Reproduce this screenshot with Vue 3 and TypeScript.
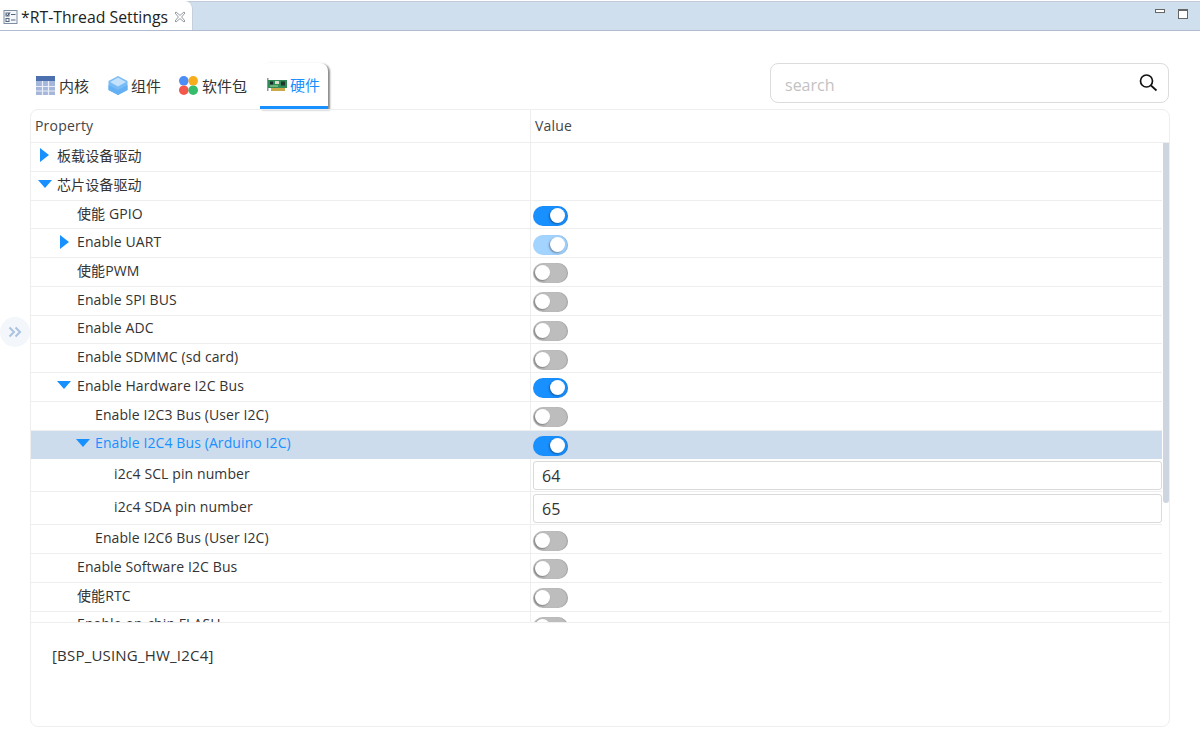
<script setup lang="ts">
interface Row {
  label: string
  level: number
  arrow?: 'right' | 'down'
  toggle?: 'on' | 'dim' | 'off'
  input?: string
  selected?: boolean
}

const rows: Row[] = [
  { label: '板载设备驱动', level: 0, arrow: 'right' },
  { label: '芯片设备驱动', level: 0, arrow: 'down' },
  { label: '使能 GPIO', level: 1, toggle: 'on' },
  { label: 'Enable UART', level: 1, arrow: 'right', toggle: 'dim' },
  { label: '使能PWM', level: 1, toggle: 'off' },
  { label: 'Enable SPI BUS', level: 1, toggle: 'off' },
  { label: 'Enable ADC', level: 1, toggle: 'off' },
  { label: 'Enable SDMMC (sd card)', level: 1, toggle: 'off' },
  { label: 'Enable Hardware I2C Bus', level: 1, arrow: 'down', toggle: 'on' },
  { label: 'Enable I2C3 Bus (User I2C)', level: 2, toggle: 'off' },
  { label: 'Enable I2C4 Bus (Arduino I2C)', level: 2, arrow: 'down', toggle: 'on', selected: true },
  { label: 'i2c4 SCL pin number', level: 3, input: '64' },
  { label: 'i2c4 SDA pin number', level: 3, input: '65' },
  { label: 'Enable I2C6 Bus (User I2C)', level: 2, toggle: 'off' },
  { label: 'Enable Software I2C Bus', level: 1, toggle: 'off' },
  { label: '使能RTC', level: 1, toggle: 'off' },
  { label: 'Enable on-chip FLASH', level: 1, toggle: 'off' }
]
</script>

<template>
  <div class="window">
    <header class="titlebar">
      <div class="editor-tab">
        <svg class="form-icon" width="16" height="16" viewBox="0 0 16 16">
          <rect x="1" y="1.5" width="13" height="13" fill="#f4f7fa" stroke="#7d8ea3" />
          <rect x="3" y="4" width="3" height="3" fill="none" stroke="#56667a" />
          <rect x="3" y="9.5" width="3" height="3" fill="none" stroke="#56667a" />
          <path d="M3.5 5.5l1 1 2.5-3" fill="none" stroke="#2f4a63" />
          <path d="M8 5.5h4.500M8 11h4.500" stroke="#56667a" />
        </svg>
        <span class="editor-title">*RT-Thread Settings</span>
        <svg class="close-icon" width="12" height="12" viewBox="0 0 12 12">
          <path d="M2 1l4 3.4L10 1l1 1-3.4 4L11 10l-1 1-4-3.4L2 11l-1-1 3.4-4L1 2z" fill="#fff" stroke="#8a8f96" stroke-width=".9" />
        </svg>
      </div>
      <div class="window-buttons">
        <span class="win-min"></span>
        <span class="win-max"></span>
      </div>
    </header>

    <main class="content">
      <div class="toolbar">
        <nav class="tabs">
          <div class="tab">
            <svg width="19" height="19" viewBox="0 0 19 19">
              <rect width="19" height="19" fill="#a4b7db" />
              <rect width="19" height="5" fill="#4c6fae" />
              <path d="M0 10.500h19M0 15h19M6.500 5v14M12.500 5v14" stroke="#e9eef8" stroke-width="1.200" />
            </svg>
            <span>内核</span>
          </div>
          <div class="tab compact">
            <svg width="20" height="19" viewBox="0 0 20 19">
              <path d="M10 0l9.500 5v9L10 19 .5 14V5z" fill="#79bbf5" />
              <path d="M10 1.500L18 6l-8 4.500L2 6z" fill="#c4e2fb" />
              <path d="M.5 9l9.500 5 9.500-5v5L10 19 .5 14z" fill="#64b0f5" />
            </svg>
            <span>组件</span>
          </div>
          <div class="tab">
            <svg width="19" height="19" viewBox="0 0 19 19">
              <circle cx="4.800" cy="4.800" r="4.800" fill="#4c8df6" />
              <circle cx="14.200" cy="4.800" r="4.800" fill="#f7ad1c" />
              <circle cx="4.800" cy="14.200" r="4.800" fill="#f4574b" />
              <circle cx="14.200" cy="14.200" r="4.800" fill="#35bd6b" />
            </svg>
            <span>软件包</span>
          </div>
          <div class="tab active">
            <svg width="20" height="17" viewBox="0 0 20 17">
              <rect x="0" y="2" width="1.500" height="13" fill="#8c98a0" />
              <rect x="1" y="4" width="19" height="8" fill="#2f8a55" />
              <rect x="3" y="5.500" width="3" height="3" fill="#1c2c30" />
              <rect x="8" y="5" width="4" height="3" fill="#d8dcc8" />
              <rect x="14" y="5.500" width="4" height="4" fill="#20352e" />
              <rect x="3" y="9.500" width="8" height="1" fill="#a8d8a0" />
              <rect x="4" y="12" width="14" height="3" fill="#c9a94a" />
            </svg>
            <span>硬件</span>
          </div>
        </nav>
        <label class="search">
          <input class="search-input" placeholder="search" />
          <svg width="20" height="20" viewBox="0 0 20 20">
            <circle cx="8.500" cy="8" r="6" fill="none" stroke="#111" stroke-width="1.700" />
            <path d="M13 12.500l5.500 5" stroke="#111" stroke-width="1.700" />
          </svg>
        </label>
      </div>

      <section class="panel">
        <div class="head">
          <div class="head-cell first">Property</div>
          <div class="head-cell">Value</div>
        </div>
        <div class="body">
          <div class="scrollbar"></div>
          <div
            v-for="row in rows"
            :key="row.label"
            class="row"
            :class="{ selected: row.selected, tall: row.input }"
          >
            <div class="name" :class="'level-' + row.level">
              <span class="arrow-box">
                <span v-if="row.arrow" :class="'arrow-' + row.arrow"></span>
              </span>
              <span class="label">{{ row.label }}</span>
            </div>
            <div class="value">
              <span v-if="row.toggle" class="toggle" :class="row.toggle"><i></i></span>
              <input v-if="row.input" class="num" :value="row.input" />
            </div>
          </div>
        </div>
        <div class="detail">[BSP_USING_HW_I2C4]</div>
      </section>
    </main>

    <div class="collapse">
      <svg width="14" height="12" viewBox="0 0 14 12">
        <path d="M1.500 1.500L6 6l-4.500 4.500M7.500 1.500L12 6l-4.500 4.500" fill="none" stroke="#a9c3e0" stroke-width="2" />
      </svg>
    </div>
  </div>
</template>

<style>
html, body { margin: 0; background: #fff; }
</style>

<style scoped>
.window {
  position: relative;
  width: 1200px;
  height: 738px;
  display: flex;
  flex-direction: column;
  overflow: hidden;
  background: #fff;
  font-family: "Open Sans", "Noto Sans CJK SC", sans-serif;
  font-size: 14px;
  color: #333;
}
.titlebar {
  box-sizing: border-box;
  height: 30px;
  margin-top: 1px;
  flex: none;
  display: flex;
  justify-content: space-between;
  background: #d0dfee;
  border-top: 1px solid #c2c9da;
  border-bottom: 1px solid #b1bcd0;
}
.editor-tab {
  width: 193px;
  height: 29px;
  margin-top: -1px;
  box-sizing: border-box;
  padding: 2px 0 0 3px;
  display: flex;
  align-items: center;
  background: #fff;
  border-top-right-radius: 8px;
  border-right: 1px solid #c6d0dd;
}
.form-icon { flex: none; }
.editor-title {
  margin-left: 2px;
  font-size: 15.800px;
  color: #222;
  white-space: nowrap;
}
.close-icon { margin-left: 6px; flex: none; }
.window-buttons {
  display: flex;
  gap: 13px;
  padding: 7px 12px 0 0;
}
.win-min {
  width: 8px;
  height: 2px;
  border: 1px solid #666;
  background: #fff;
}
.win-max {
  width: 8px;
  height: 7px;
  border: 1px solid #666;
  border-top-width: 2px;
  background: #fff;
}
.content {
  flex: 1;
  padding: 32px 30px 11px;
  display: flex;
  flex-direction: column;
  min-height: 0;
}
.toolbar {
  height: 46px;
  flex: none;
  display: flex;
  justify-content: space-between;
  align-items: flex-start;
}
.tabs {
  display: flex;
  gap: 7px;
  height: 46px;
}
.tab {
  box-sizing: border-box;
  height: 46px;
  padding: 0 6px 1px;
  display: flex;
  align-items: center;
  gap: 4px;
  font-size: 15px;
  font-family: "Noto Sans CJK SC", sans-serif;
  color: #333;
}
.tab.compact { gap: 3px; padding-right: 5px; }
.tab.active {
  padding: 0 8px 0 7px;
  color: #1890ff;
  background: #fff;
  border-bottom: 3px solid #1890ff;
  border-radius: 8px 8px 0 0;
  box-shadow: 2px 1px 2px #8c8c8c;
  gap: 3px;
}
.search {
  box-sizing: border-box;
  width: 399px;
  height: 40px;
  margin-right: 1px;
  padding: 0 10px 0 14px;
  display: flex;
  align-items: center;
  border: 1px solid #dcdcdc;
  border-radius: 8px;
}
.search-input {
  flex: 1;
  min-width: 0;
  border: 0;
  outline: 0;
  padding: 3px 0 0;
  font: inherit;
  font-size: 16px;
}
.search-input::placeholder { color: #c2c2c2; opacity: 1; }
.panel {
  flex: 1;
  min-height: 0;
  display: flex;
  flex-direction: column;
  border: 1px solid #eee;
  border-radius: 8px;
}
.head {
  height: 32px;
  flex: none;
  display: flex;
  align-items: center;
  border-bottom: 1px solid #eee;
  color: #444;
}
.head-cell {
  box-sizing: border-box;
  padding: 0 0 2px 4px;
  letter-spacing: .2px;
}
.head-cell.first {
  width: 500px;
  height: 100%;
  display: flex;
  align-items: center;
  border-right: 1px solid #eee;
}
.body {
  position: relative;
  height: 479px;
  flex: none;
  overflow: hidden;
  padding-right: 7px;
  border-bottom: 1px solid #eee;
}
.scrollbar {
  position: absolute;
  z-index: 1;
  top: 0;
  right: 0;
  width: 6px;
  height: 360px;
  border-radius: 0 0 3px 3px;
  background: #ccd5e0;
}
.row {
  box-sizing: border-box;
  height: 28.750px;
  display: flex;
  border-bottom: 1px solid #eee;
}
.row.tall { height: 33px; }
.row.selected {
  background: #cddcec;
  color: #1890ff;
  border-bottom-color: #cddcec;
}
.name {
  box-sizing: border-box;
  width: 500px;
  flex: none;
  display: flex;
  align-items: center;
  padding-bottom: 3px;
  border-right: 1px solid #eee;
  white-space: nowrap;
  letter-spacing: .1px;
}
.selected .name { border-right-color: #cddcec; }
.level-1 { padding-left: 19px; }
.level-1 .arrow-box { width: 27px; }
.level-2 { padding-left: 38px; }
.level-3 { padding-left: 57px; }
.arrow-box {
  width: 26px;
  height: 16px;
  flex: none;
  display: flex;
  align-items: center;
  justify-content: center;
}
.arrow-right {
  width: 0;
  height: 0;
  margin-left: 1px;
  border-left: 9px solid #1890ff;
  border-top: 7.500px solid transparent;
  border-bottom: 7.500px solid transparent;
}
.arrow-down {
  width: 0;
  height: 0;
  margin-left: 1px;
  border-top: 8px solid #1890ff;
  border-left: 7.500px solid transparent;
  border-right: 7.500px solid transparent;
}
.value {
  flex: 1;
  min-width: 0;
  padding-left: 2px;
  display: flex;
  align-items: center;
}
.toggle {
  position: relative;
  width: 35px;
  height: 20px;
  margin-top: 3px;
  border-radius: 10px;
  background: #bdbdbd;
  box-shadow: -1px 0 1px rgba(0, 0, 0, .15) inset;
}
.toggle i {
  position: absolute;
  top: 2px;
  left: 2px;
  width: 15px;
  height: 15px;
  border-radius: 50%;
  background: #fff;
  box-shadow: -1px 1px 2px rgba(0, 0, 0, .35);
}
.toggle.on { background: #1890ff; }
.toggle.dim { background: #a3d3ff; }
.toggle.on i, .toggle.dim i { left: 17px; }
.num {
  box-sizing: border-box;
  width: 629px;
  height: 29.500px;
  padding: 2px 8px 0;
  outline: 0;
  border: 1px solid #dadada;
  border-radius: 3px;
  font: inherit;
  font-size: 16px;
  color: #333;
  background: #fff;
}
.detail {
  padding: 22px 0 0 21px;
  font-size: 15px;
  letter-spacing: .2px;
  color: #333;
}
.collapse {
  position: absolute;
  left: 0;
  top: 317px;
  width: 30px;
  height: 30px;
  border-radius: 50%;
  background: #f3f6fa;
  display: flex;
  align-items: center;
  justify-content: center;
}
</style>
